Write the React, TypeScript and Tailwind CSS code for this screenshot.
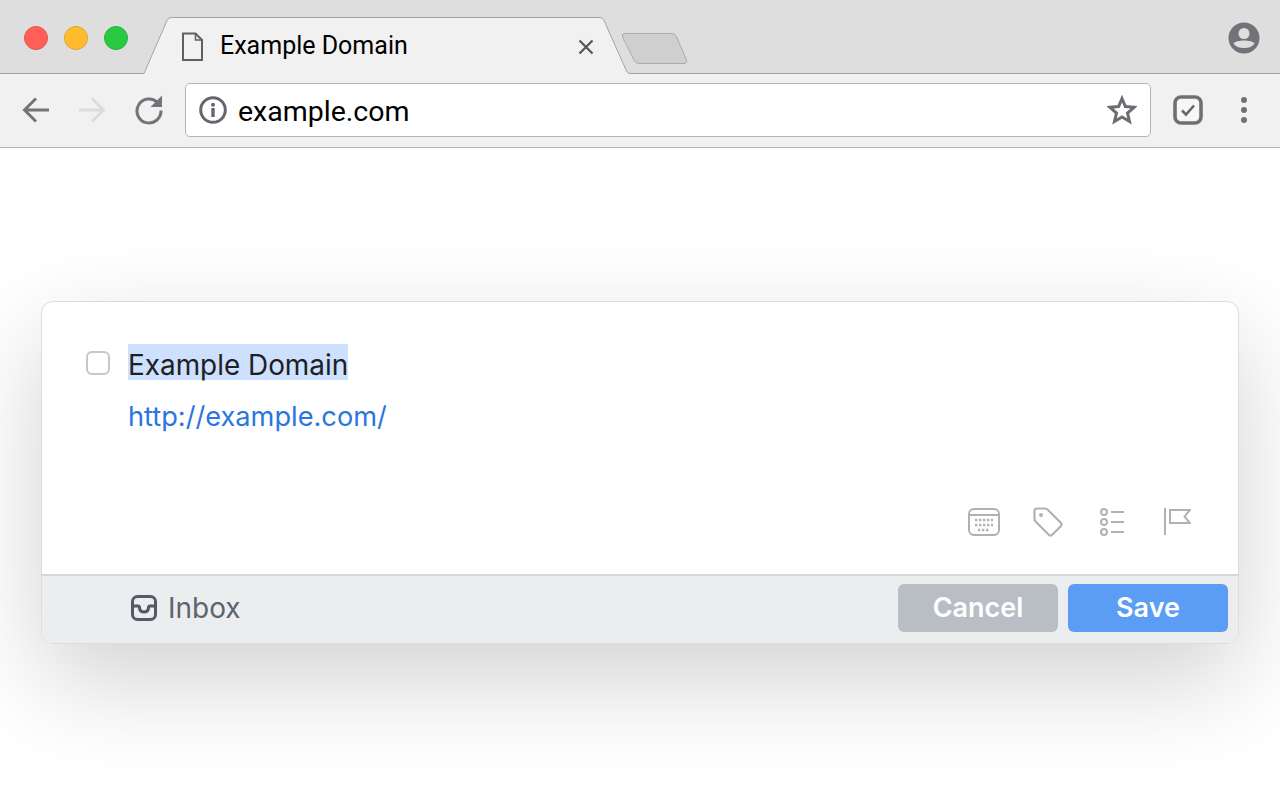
import React from "react";

function TabShape() {
  return (
    <svg className="absolute left-0 top-0" width="1280" height="74" viewBox="0 0 1280 74">
      <path d="M0 73.5H144L167 20.5Q168.5 17.5 171 17.5H600Q602.5 17.5 604 20.5L626.5 71Q627.5 73.5 630 73.5H1280V74H0Z" fill="#f1f1f1" />
      <path d="M0 73.5H144L167 20.5Q168.5 17.5 171 17.5H600Q602.5 17.5 604 20.5L626.5 71Q627.5 73.5 630 73.5H1280" fill="none" stroke="#a4a4a4" strokeWidth="1" />
      <path d="M624.5 33.5H672Q675 33.5 676.5 36.5L686.5 60Q687.5 63.5 684 63.5H639Q636 63.5 634.5 61L622.5 37Q621.5 33.5 624.5 33.5Z" fill="#cfcfcf" stroke="#ababab" strokeWidth="1" />
    </svg>
  );
}

function Dot({ c, b }: { c: string; b: string }) {
  return <span className="block h-6 w-6 rounded-full border" style={{ backgroundColor: c, borderColor: b }} />;
}

export default function App() {
  return (
    <div className="flex h-[800px] w-[1280px] flex-col overflow-hidden bg-white font-['Inter',sans-serif]">
      <header className="relative flex h-[74px] shrink-0 items-start bg-[#dedede] pt-[26px]">
        <TabShape />
        <div className="relative flex gap-4 pl-6">
          <Dot c="#ff5f57" b="#e9524a" />
          <Dot c="#ffbd2e" b="#e5a324" />
          <Dot c="#28ca41" b="#22b336" />
        </div>
        <div className="relative ml-[54px] flex w-[412px] items-center">
          <svg width="21" height="29" viewBox="0 0 21 29" fill="none" stroke="#5f6063" strokeWidth="2" className="mt-[4px] shrink-0">
            <path d="M1 1.5H13.5L20 8V28H1Z" />
            <path d="M13.5 1.5V8H20" strokeWidth="1.5" />
          </svg>
          <span className="ml-[17px] mt-[4px] text-[25px] leading-[32px] text-black font-['Roboto',sans-serif]">Example Domain</span>
          <svg width="16" height="16" viewBox="0 0 16 16" stroke="#555" strokeWidth="2.2" className="ml-auto mt-[5px] shrink-0">
            <path d="M1.5 1.5L14.5 14.5M14.5 1.5L1.5 14.5" />
          </svg>
        </div>
        <svg width="32" height="32" viewBox="0 0 32 32" className="absolute right-[20px] top-[22px]">
          <circle cx="16" cy="16" r="15.5" fill="#717378" />
          <circle cx="16" cy="11.5" r="5.5" fill="#dedede" />
          <path d="M5.5 21.5C8 17.5 24 17.5 26.5 21.5C24.5 24.5 21 26 16 26S7.5 24.5 5.5 21.5Z" fill="#dedede" />
        </svg>
      </header>

      <nav className="flex h-[74px] shrink-0 items-center border-b border-[#b4b4b4] bg-[#f1f1f1] pb-px">
        <svg width="28" height="28" viewBox="0 0 28 28" fill="none" stroke="#72747a" strokeWidth="3" className="ml-[22px] shrink-0">
          <path d="M27 14H3M14 2.5L2.5 14L14 25.5" />
        </svg>
        <svg width="28" height="28" viewBox="0 0 28 28" fill="none" stroke="#dcdcdc" strokeWidth="3" className="ml-[28px] shrink-0">
          <path d="M1 14H25M14 2.5L25.5 14L14 25.5" />
        </svg>
        <svg width="30" height="30" viewBox="0 0 30 30" className="ml-[28px] shrink-0">
          <path d="M23.5 7.5A12 12 0 1 0 27 15.5" fill="none" stroke="#72747a" strokeWidth="3" />
          <path d="M28 0.5V12H16.5Z" fill="#72747a" />
        </svg>
        <div className="ml-[21px] flex h-[54px] w-[966px] shrink-0 items-center rounded-[5px] border border-[#b4b4b4] bg-white pl-[13px] pr-[13px]">
          <svg width="28" height="28" viewBox="0 0 28 28" className="shrink-0">
            <circle cx="14" cy="14" r="12.3" fill="none" stroke="#65676c" strokeWidth="3" />
            <circle cx="14" cy="8.8" r="2" fill="#65676c" />
            <rect x="12.3" y="12" width="3.4" height="9" fill="#65676c" />
          </svg>
          <span className="ml-[11px] mt-[3px] text-[28.5px] leading-[36px] text-black font-['Roboto',sans-serif]">example.com</span>
          <svg width="30" height="30" viewBox="0 0 30 30" className="ml-auto shrink-0">
            <path d="M15 3.5L18.4 11.6L27 12.3L20.5 18L22.5 26.5L15 22L7.5 26.5L9.5 18L3 12.3L11.6 11.6Z" fill="none" stroke="#6b6d73" strokeWidth="3" strokeLinejoin="miter" />
          </svg>
        </div>
        <svg width="30" height="30" viewBox="0 0 30 30" className="ml-[22px] shrink-0" fill="none">
          <rect x="2" y="2" width="26" height="26" rx="6" fill="#f6f6f6" stroke="#6f7073" strokeWidth="3.6" />
          <path d="M9 15.5L13 19.5L21 10.5" stroke="#66686c" strokeWidth="2.6" />
        </svg>
        <div className="ml-[38px] flex flex-col gap-[4px]">
          <span className="block h-[6px] w-[6px] rounded-full bg-[#6f7176]" />
          <span className="block h-[6px] w-[6px] rounded-full bg-[#6f7176]" />
          <span className="block h-[6px] w-[6px] rounded-full bg-[#6f7176]" />
        </div>
      </nav>

      <main className="flex-1 pl-[41px] pt-[153px]">
        <section className="flex h-[343px] w-[1198px] flex-col overflow-hidden rounded-[12px] border border-[#dcdddf] bg-white shadow-[0_36px_100px_rgba(0,0,0,0.18)]">
          <div className="relative flex-1 pl-[44px] pt-[42px]">
            <div className="flex items-center">
              <span className="mt-[1px] block h-6 w-6 rounded-[6px] border-2 border-[#c6c7ca] bg-white" />
              <span className="ml-[18px] inline-block h-[36px] bg-[#cde0fd] text-[27.9px] leading-[43px] text-[#1d1f23]">Example Domain</span>
            </div>
            <a className="ml-[42px] mt-[19px] block text-[27.2px] leading-[36px] text-[#2a75e0]">http://example.com/</a>
            <div className="absolute right-[47px] top-[205px] flex items-center">
              <svg width="34" height="30" viewBox="0 0 34 30" fill="none" stroke="#b1b1b1" strokeWidth="2">
                <rect x="2" y="2" width="30" height="26" rx="5" />
                <path d="M2 8H32" />
                <path d="M8 13h18M8 18h18M11 23h12" strokeWidth="2.4" strokeDasharray="2.4 1.6" />
              </svg>
              <svg width="30" height="30" viewBox="0 0 30 30" fill="none" stroke="#b1b1b1" strokeWidth="2.2" className="ml-[32px]">
                <path d="M4 1.5H12Q13.5 1.5 15 3L28 16Q29 17.5 28 19L19 28Q17.5 29 16 28L3 15Q1.5 13.5 1.5 12V4Q1.5 1.5 4 1.5Z" />
                <circle cx="8" cy="8" r="2" fill="#b1b1b1" stroke="none" />
              </svg>
              <svg width="24" height="30" viewBox="0 0 24 30" fill="none" stroke="#b1b1b1" strokeWidth="2" className="ml-[37px]">
                <circle cx="4" cy="5" r="3" />
                <circle cx="4" cy="15" r="3" />
                <circle cx="4" cy="25" r="3" />
                <path d="M11 5H24M11 15H24M11 25H24" />
              </svg>
              <svg width="28" height="28" viewBox="0 0 28 28" fill="none" stroke="#b1b1b1" strokeWidth="2" className="ml-[39px]">
                <path d="M2 0V27" />
                <path d="M7 2H27L21.5 8.5L27 15H7Z" />
              </svg>
            </div>
          </div>
          <footer className="flex h-[69px] shrink-0 items-center border-t-2 border-[#d6d7d9] bg-[#ecedef] pb-[3px] pl-[89px] pr-[10px]">
            <svg width="26" height="26" viewBox="0 0 26 26" fill="none" stroke="#515a65" strokeWidth="3" className="shrink-0">
              <rect x="1.5" y="1.5" width="23" height="23" rx="5" />
              <path d="M2 11H7Q8.5 11 8.5 13Q9 17 13 17T17.5 13Q17.5 11 19 11H24" />
            </svg>
            <span className="ml-[11px] text-[28px] leading-[36px] text-[#5d646e]">Inbox</span>
            <button className="ml-auto h-[48px] w-[160px] rounded-[6px] bg-[#b9bec5] text-[27px] font-semibold text-white">Cancel</button>
            <button className="ml-[10px] h-[48px] w-[160px] rounded-[6px] bg-[#5b9cf5] text-[27px] font-semibold text-white">Save</button>
          </footer>
        </section>
      </main>
    </div>
  );
}
